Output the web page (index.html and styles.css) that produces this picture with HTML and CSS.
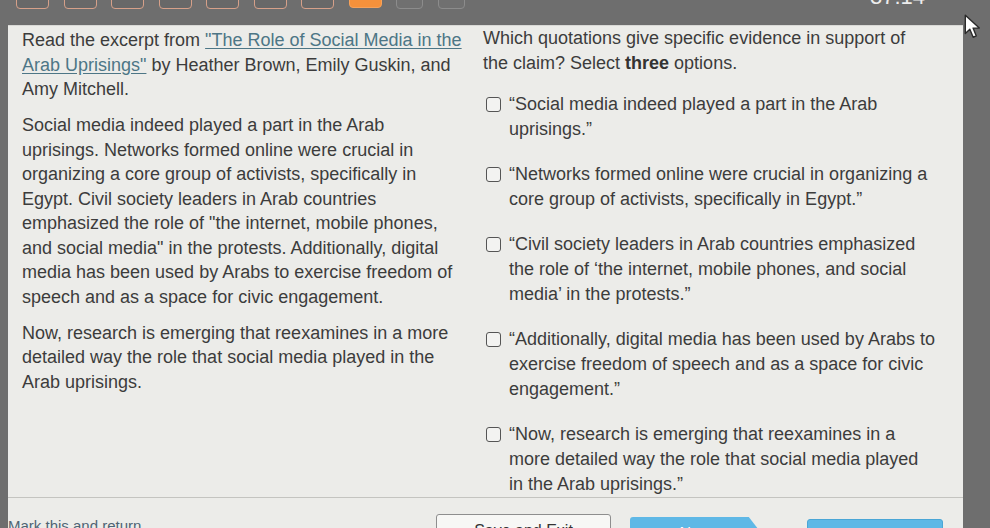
FILE: index.html
```html
<!DOCTYPE html>
<html lang="en">
<head>
<meta charset="utf-8">
<title>Assignment</title>
<link rel="stylesheet" href="styles.css">
</head>
<body>
<header class="topbar">
  <nav class="steps">
    <span class="step done"></span>
    <span class="step done"></span>
    <span class="step done"></span>
    <span class="step done"></span>
    <span class="step done"></span>
    <span class="step done"></span>
    <span class="step done"></span>
    <span class="step current"></span>
    <span class="step todo"></span>
    <span class="step todo"></span>
  </nav>
  <div class="timer">37:14</div>
</header>

<main class="panel">
  <section class="content">
    <div class="passage">
      <p>Read the excerpt from <a class="link" href="#">"The Role of Social Media in the<br>Arab Uprisings"</a> by Heather Brown, Emily Guskin, and<br>Amy Mitchell.</p>
      <p>Social media indeed played a part in the Arab<br>uprisings. Networks formed online were crucial in<br>organizing a core group of activists, specifically in<br>Egypt. Civil society leaders in Arab countries<br>emphasized the role of "the internet, mobile phones,<br>and social media" in the protests. Additionally, digital<br>media has been used by Arabs to exercise freedom of<br>speech and as a space for civic engagement.</p>
      <p>Now, research is emerging that reexamines in a more<br>detailed way the role that social media played in the<br>Arab uprisings.</p>
    </div>
    <div class="question">
      <p class="prompt">Which quotations give specific evidence in support of<br>the claim? Select <b>three</b> options.</p>
      <ul class="options">
        <li class="option"><span class="box"></span><span class="opt-text">“Social media indeed played a part in the Arab<br>uprisings.”</span></li>
        <li class="option"><span class="box"></span><span class="opt-text">“Networks formed online were crucial in organizing a<br>core group of activists, specifically in Egypt.”</span></li>
        <li class="option"><span class="box"></span><span class="opt-text">“Civil society leaders in Arab countries emphasized<br>the role of ‘the internet, mobile phones, and social<br>media’ in the protests.”</span></li>
        <li class="option"><span class="box"></span><span class="opt-text">“Additionally, digital media has been used by Arabs to<br>exercise freedom of speech and as a space for civic<br>engagement.”</span></li>
        <li class="option"><span class="box"></span><span class="opt-text">“Now, research is emerging that reexamines in a<br>more detailed way the role that social media played<br>in the Arab uprisings.”</span></li>
      </ul>
    </div>
  </section>
  <footer class="footer">
    <span class="mark">Mark this and return</span>
    <button class="btn save">Save and Exit</button>
    <button class="btn next">Next</button>
    <button class="btn submit">Submit</button>
  </footer>
</main>

<svg class="cursor" width="24" height="28" viewBox="0 0 22 26" aria-hidden="true">
  <path d="M2 2 L2 19 L6.2 15 L9.3 22.5 L12.2 21.3 L9.2 14 L15 14 Z" fill="#ffffff" stroke="#2a2a2a" stroke-width="1.3" stroke-linejoin="round"/>
</svg>
</body>
</html>
```

FILE: styles.css
```css
* { box-sizing: border-box; }

html, body {
  margin: 0;
  padding: 0;
  height: 528px;
  overflow: hidden;
}

body {
  background: #6e6e6e;
  font-family: "Liberation Sans", Arial, sans-serif;
  color: #3c3c3c;
  position: relative;
}

.topbar {
  height: 25px;
  display: flex;
  align-items: flex-start;
  overflow: hidden;
}

.steps {
  display: flex;
  gap: 14.5px;
  padding-left: 16px;
  margin-top: -11px;
}

.step {
  display: block;
  width: 33px;
  height: 20px;
  border-radius: 4px;
}

.step.done {
  background: #686868;
  border: 1.5px solid #d6a089;
}

.step.current {
  background: #f5913b;
  border: 1.5px solid #f7a25a;
  height: 19px;
}

.step.todo {
  width: 27px;
  background: #707070;
  border: 1.5px solid #8c8c8c;
}

.timer {
  margin-left: auto;
  margin-right: 65px;
  margin-top: -14px;
  font-size: 22px;
  line-height: 22px;
  color: #ececec;
}

.panel {
  margin-left: 8px;
  width: 955px;
  height: 503px;
  background: #ecece9;
  border-top: 1px solid #d9d9d6;
  display: flex;
  flex-direction: column;
}

.content {
  flex: none;
  height: 472px;
  display: grid;
  grid-template-columns: 450px 1fr;
  column-gap: 11px;
  padding: 0 0 0 14px;
  border-bottom: 1px solid #c4c4c0;
  font-size: 18px;
}

.passage {
  padding-top: 2px;
  line-height: 24.5px;
}

.passage p {
  margin: 0;
}

.passage p + p {
  margin-top: 11.5px;
}

.link {
  color: #4d7686;
  text-decoration: underline;
  text-underline-offset: 2px;
}

.question {
  line-height: 25px;
}

.prompt {
  margin: 0;
}

.prompt b {
  font-weight: bold;
  color: #333;
}

.options {
  list-style: none;
  margin: 16px 0 0;
  padding: 0;
  display: flex;
  flex-direction: column;
  gap: 20px;
}

.option {
  display: flex;
  align-items: flex-start;
  gap: 8px;
  padding-left: 3px;
}

.box {
  flex: none;
  width: 15px;
  height: 15px;
  margin-top: 5px;
  border: 1.5px solid #555;
  border-radius: 3px;
  background: #f3f3f1;
}

.opt-text {
  display: block;
  white-space: nowrap;
}

.footer {
  flex: 1;
  display: flex;
  align-items: flex-start;
}

.mark {
  flex: 0 0 428px;
  margin-top: 19px;
  font-size: 15px;
  color: #4f6474;
}

.btn {
  font-family: "Liberation Sans", Arial, sans-serif;
  font-size: 16px;
  height: 34px;
  margin-top: 16px;
  border-radius: 3px;
  padding: 0;
}

.save {
  width: 175px;
  background: #f7f7f5;
  border: 1px solid #8e8e8e;
  color: #333;
}

.next {
  width: 132px;
  margin-left: 19px;
  margin-top: 19px;
  background: #5fb8e6;
  border: none;
  color: #fff;
  clip-path: polygon(0 0, 90% 0, 100% 50%, 90% 100%, 0 100%);
}

.submit {
  width: 136px;
  margin-left: 45px;
  margin-top: 21px;
  background: #5fb8e6;
  border: 1px solid #4aa6d6;
  color: #fff;
}

.cursor {
  position: absolute;
  left: 963px;
  top: 13px;
}
```
